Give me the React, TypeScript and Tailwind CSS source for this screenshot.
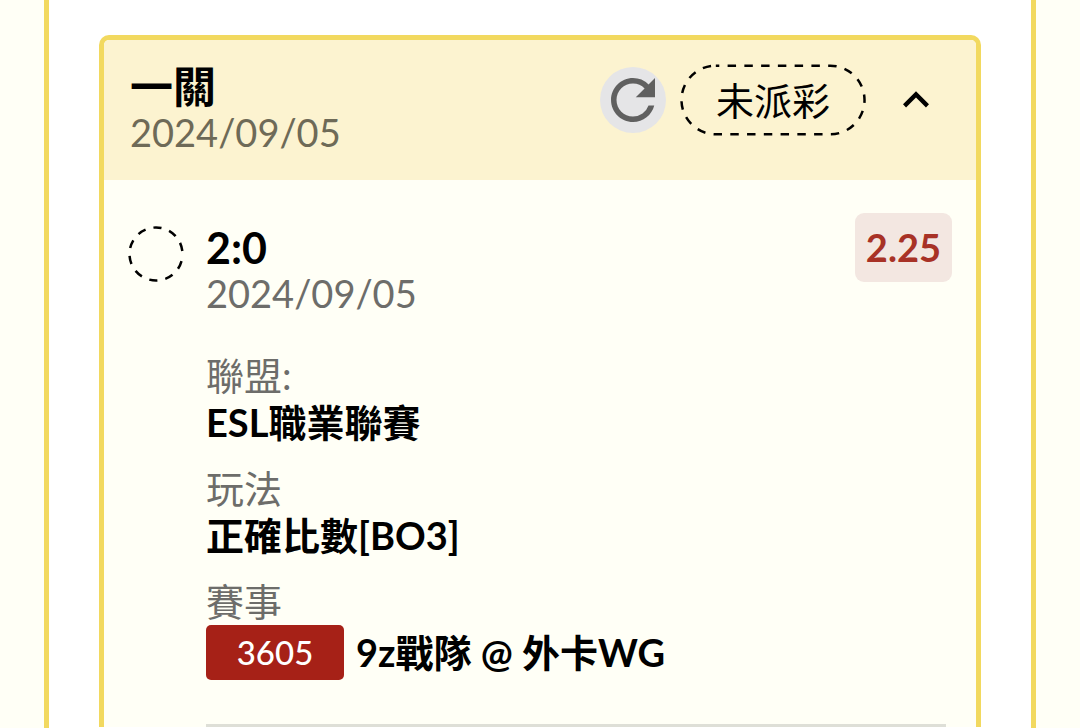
import { useState } from 'react';
import { MdKeyboardArrowUp, MdRefresh } from 'react-icons/md';

const details = [
  { label: '聯盟:', value: 'ESL職業聯賽' },
  { label: '玩法', value: '正確比數[BO3]' },
];

function PendingRing() {
  return (
    <svg viewBox="0 0 56 56" className="mt-[13px] size-14 shrink-0" fill="none" aria-hidden="true">
      <circle cx="28" cy="28" r="26.5" stroke="#000" strokeWidth="2.5" strokeDasharray="8.3 8" strokeDashoffset="9" />
    </svg>
  );
}

function StatusPill({ text }: { text: string }) {
  return (
    <span className="relative flex h-[72px] items-center px-9 text-[38px] leading-[48px]">
      <svg viewBox="0 0 187 72" className="absolute inset-0 size-full" fill="none" aria-hidden="true">
        <rect
          x="1.5"
          y="1.5"
          width="184"
          height="69"
          rx="34.5"
          stroke="#000"
          strokeWidth="2.5"
          strokeDasharray="8.5 8.35"
          strokeDashoffset="5"
        />
      </svg>
      {text}
    </span>
  );
}

export default function App() {
  const [open, setOpen] = useState(true);

  return (
    <div className="min-h-screen bg-[#fffff6] px-11 font-[Lato,'Noto_Sans_CJK_TC',sans-serif] text-black">
      <main className="min-h-screen border-x-[5px] border-[#f2d95f] bg-white px-[50px] pt-[35px]">
        <section className="rounded-t-[10px] border-[5px] border-b-0 border-[#f2d95f] bg-[#fffff6]">
          <header className="flex items-start rounded-t-[5px] bg-[#fcf3d0] pt-6 pr-[34px] pb-[26px] pl-[26px]">
            <div className="flex-1">
              <h1 className="text-[43px] leading-[46px] font-bold">一關</h1>
              <p className="text-[38px] leading-[44px] text-[#6e6a57]">2024/09/05</p>
            </div>
            <div className="flex items-center">
              <button
                type="button"
                aria-label="重新整理"
                className="mr-[14px] flex size-[66px] items-center justify-center rounded-full bg-[#e5e5e7] text-[#606060]"
              >
                <MdRefresh size={66} />
              </button>
              <StatusPill text="未派彩" />
              <button type="button" aria-label="收合" aria-expanded={open} onClick={() => setOpen(!open)} className="ml-6">
                <MdKeyboardArrowUp size={52} className={open ? '' : 'rotate-180'} />
              </button>
            </div>
          </header>

          {open ? (
            <div className="flex items-start px-6 pt-[33px]">
              <PendingRing />
              <div className="ml-[22px] flex-1">
                <div className="flex items-start justify-between">
                  <div className="pt-3">
                    <h2 className="text-[43px] leading-[46px] font-bold">2:0</h2>
                    <p className="text-[38px] leading-[44px] text-[#6d6d6a]">2024/09/05</p>
                  </div>
                  <span className="rounded-[9px] bg-[#f3e7e1] px-[11px] py-3 text-[38px] leading-[45px] font-bold text-[#a83226]">
                    2.25
                  </span>
                </div>

                <dl className="mt-[37px] flex flex-col gap-[19px] text-[38px] leading-[47px]">
                  {details.map((item) => (
                    <div key={item.label}>
                      <dt className="text-[#6d6d6a]">{item.label}</dt>
                      <dd className="font-bold">{item.value}</dd>
                    </div>
                  ))}
                  <div>
                    <dt className="text-[#6d6d6a]">賽事</dt>
                    <dd className="flex items-center gap-3 font-bold">
                      <span className="w-[138px] rounded-[5px] bg-[#a62117] text-center text-[33px] leading-[55px] font-medium text-white">
                        3605
                      </span>
                      9z戰隊 @ 外卡WG
                    </dd>
                  </div>
                </dl>

                <hr className="mt-11 mr-[6px] border-t-[3px] border-[#dedfd7]" />
              </div>
            </div>
          ) : null}
        </section>
      </main>
    </div>
  );
}
